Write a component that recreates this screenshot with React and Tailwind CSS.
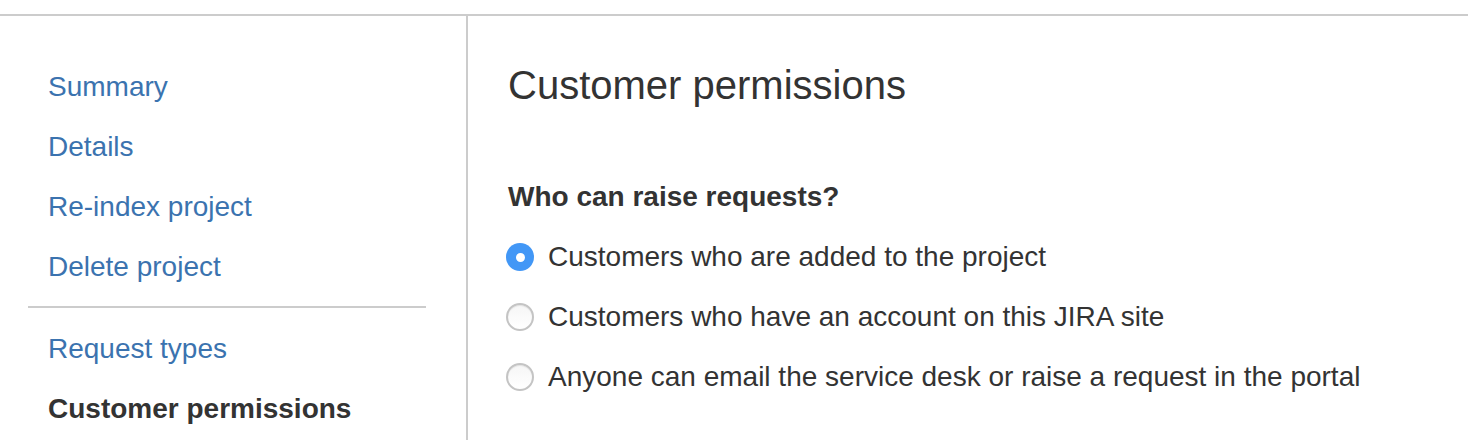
const sideLinks = ['Summary', 'Details', 'Re-index project', 'Delete project'];

const options = [
  { label: 'Customers who are added to the project', checked: true },
  { label: 'Customers who have an account on this JIRA site', checked: false },
  { label: 'Anyone can email the service desk or raise a request in the portal', checked: false },
];

function Radio({ checked }) {
  if (checked) {
    return (
      <span className="flex h-[28px] w-[28px] shrink-0 items-center justify-center rounded-full bg-[#4297f6]">
        <span className="h-[9px] w-[9px] rounded-full bg-white" />
      </span>
    );
  }
  return (
    <span className="block h-[28px] w-[28px] shrink-0 rounded-full border-2 border-[#c4c4c4] bg-gradient-to-b from-[#f6f6f6] to-white shadow-[inset_0_1px_1px_rgba(0,0,0,0.08)]" />
  );
}

export default function App() {
  return (
    <div className="h-[440px] w-full overflow-hidden bg-white font-['Liberation_Sans',Arial,sans-serif] text-[#333]">
      <div className="h-[14px]" />
      <div className="flex h-[426px] border-t-2 border-[#cccccc]">
        <aside className="w-[468px] shrink-0 border-r-2 border-[#cccccc] pl-[28px] pr-[40px] pt-[41px]">
          <nav className="flex flex-col">
            {sideLinks.map((l) => (
              <a key={l} href="#" className="pl-[20px] text-[28px] leading-[60px] text-[#3b73af]">
                {l}
              </a>
            ))}
          </nav>
          <div className="mb-[11px] mt-[9px] h-[2px] bg-[#cccccc]" />
          <nav className="flex flex-col">
            <a href="#" className="pl-[20px] text-[28px] leading-[60px] text-[#3b73af]">
              Request types
            </a>
            <span className="pl-[20px] text-[28px] font-bold leading-[60px] text-[#333]">
              Customer permissions
            </span>
          </nav>
        </aside>
        <main className="flex-1 pl-[38px] pt-[45px]">
          <h1 className="pl-[2px] text-[40px] font-normal leading-[48px] text-[#333]">Customer permissions</h1>
          <h2 className="mt-[58px] pl-[2px] text-[28px] font-bold leading-[60px] text-[#333]">Who can raise requests?</h2>
          <div className="flex flex-col">
            {options.map((o) => (
              <label key={o.label} className="flex h-[60px] items-center gap-[14px]">
                <Radio checked={o.checked} />
                <span className="text-[28px] leading-[60px] text-[#333]">{o.label}</span>
              </label>
            ))}
          </div>
        </main>
      </div>
    </div>
  );
}
